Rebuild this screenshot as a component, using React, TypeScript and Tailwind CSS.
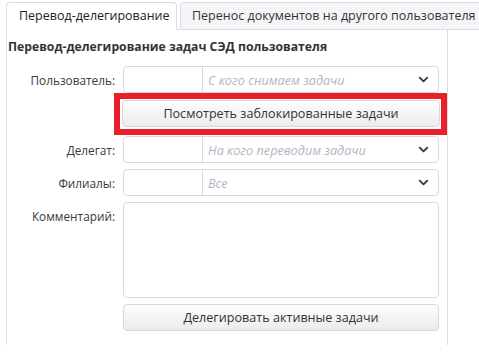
import { ChevronDown } from 'lucide-react'

function SelectField({ placeholder }: { placeholder: string }) {
  return (
    <div className="flex h-[27px] w-[316px] rounded-[4px] border border-[#d9d9e6] bg-white">
      <div className="w-[79px] border-r border-[#d9d9e6]" />
      <div className="flex flex-1 items-center pl-[5px] pr-[7px]">
        <span className="flex-1 text-[12.7px] italic text-[#b4b4c4]">{placeholder}</span>
        <ChevronDown size={15} strokeWidth={3} className="text-[#3a3a3a]" />
      </div>
    </div>
  )
}

function GrayButton({ children, w }: { children: string; w: string }) {
  return (
    <button
      className={`${w} h-[27px] rounded-[4px] border border-[#d6d6e0] bg-gradient-to-b from-[#fdfdfd] to-[#ececec] text-[12.6px] font-medium text-[#333]`}
    >
      {children}
    </button>
  )
}

function Row({ label, children }: { label: string; children: React.ReactNode }) {
  return (
    <div className="flex items-center">
      <div className="w-[108px] text-right text-[11.8px] text-[#3a3a3a]">{label}</div>
      <div className="ml-[8px]">{children}</div>
    </div>
  )
}

export default function App() {
  return (
    <div className="relative h-[357px] w-[479px] overflow-hidden bg-white font-['Open_Sans',sans-serif] text-[13px] leading-[18px] text-[#333]">
      {/* Tabs */}
      <div className="ml-[6px] flex h-[30px] items-end whitespace-nowrap border-b border-[#dcdce6] pt-[3px] text-[12.5px]">
        <div className="-mb-px flex h-[28px] w-[171px] shrink-0 items-center rounded-t-[4px] border border-b-white border-[#dcdce6] bg-white pl-[12px] text-[#222]">
          Перевод-делегирование
        </div>
        <div className="ml-[3px] flex h-[27px] shrink-0 items-center rounded-t-[4px] border border-b-0 border-[#dcdce6] bg-[#f5f5f7] pl-[11px] pr-[12px] text-[#333]">
          Перенос документов на другого пользователя
        </div>
      </div>

      {/* Panel */}
      <div className="ml-[6px] h-[315px] w-[442px] border-l border-r border-[#dcdce6]">
        <div className="pl-[1px] pt-[8px] text-[12.2px] font-bold text-[#333]">
          Перевод-делегирование задач СЭД пользователя
        </div>

        <div className="mt-[10px] flex flex-col">
          <Row label="Пользователь:">
            <SelectField placeholder="С кого снимаем задачи" />
          </Row>

          <div className="ml-[107px] h-[42px] w-[333px] border-[6px] border-[#e8202a] pl-[2px] pt-[1px]">
            <GrayButton w="w-[318px]">Посмотреть заблокированные задачи</GrayButton>
          </div>

          <div className="mt-[1px] flex flex-col gap-[6px]">
            <Row label="Делегат:">
              <SelectField placeholder="На кого переводим задачи" />
            </Row>
            <Row label="Филиалы:">
              <SelectField placeholder="Все" />
            </Row>
            <div className="flex items-start">
              <div className="w-[108px] pt-[5px] text-right text-[11.8px] text-[#3a3a3a]">Комментарий:</div>
              <textarea className="ml-[8px] h-[96px] w-[316px] resize-none rounded-[4px] border border-[#d9d9e6] outline-none" />
            </div>
            <div className="ml-[116px]">
              <GrayButton w="w-[316px]">Делегировать активные задачи</GrayButton>
            </div>
          </div>
        </div>
      </div>
    </div>
  )
}
